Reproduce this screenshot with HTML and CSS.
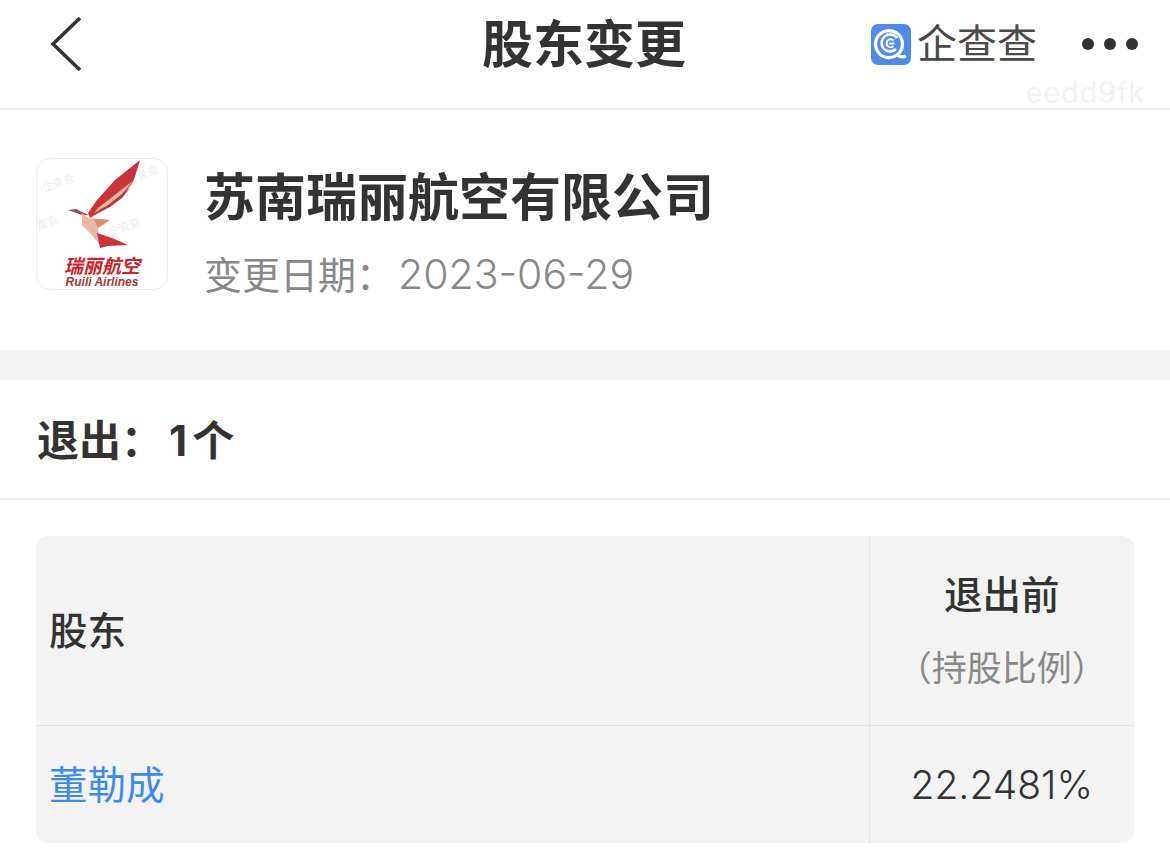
FILE: index.html
```html
<!DOCTYPE html>
<html lang="zh-CN">
<head>
    <meta charset="UTF-8">
    <meta name="viewport" content="width=device-width, initial-scale=1.0">
    <title>股东变更</title>
    <link rel="stylesheet" href="styles.css">
</head>
<body>

<header class="topbar">
    <svg class="back-icon" width="32" height="56" viewBox="0 0 32 56">
        <path d="M30 2 L3 28 L30 54" fill="none" stroke="#333" stroke-width="3.6"/>
    </svg>
    <h1 class="topbar-title">股东变更</h1>
    <div class="brand">
        <svg class="brand-icon" width="40" height="41" viewBox="0 0 40 41">
            <rect width="40" height="41" rx="7" fill="#4f8be6"/>
            <path d="M26 31 A13.5 13.5 0 1 1 31.5 20 A13.5 13.5 0 0 1 26 31 Q30 34 35 32" fill="none" stroke="#fff" stroke-width="3.2"/>
            <path d="M25 25 A8.5 8.5 0 1 1 26 14" fill="none" stroke="#fff" stroke-width="2.6"/>
            <path d="M22.5 22 A4 4 0 1 1 22.5 16.5 M18 19.5 H23.5" fill="none" stroke="#fff" stroke-width="2"/>
        </svg>
        <span class="brand-name">企查查</span>
    </div>
    <div class="more-dots"><i></i><i></i><i></i></div>
    <span class="watermark">eedd9fk</span>
</header>

<section class="company">
    <div class="logo">
        <svg class="logo-bird" width="132" height="132" viewBox="0 0 132 132">
            <text class="logo-mark" x="8" y="34" transform="rotate(-20 8 34)">企查查</text>
            <text class="logo-mark" x="92" y="26" transform="rotate(-20 92 26)">企查查</text>
            <text class="logo-mark" x="2" y="72" transform="rotate(-20 2 72)">查查</text>
            <text class="logo-mark" x="74" y="78" transform="rotate(-20 74 78)">企查查</text>
            <path d="M104 2 L79 22 L61 42 L52 55 L54 60 L71 50 L86 39 L97 24 L102 9 Z" fill="#c8343a"/>
            <path d="M98 22 L80 36 L62 50 L58 55 L72 47 L86 36 Z" fill="#e8b9a0"/>
            <path d="M94 30 L78 43 L62 55 L74 49 L86 40 Z" fill="#b8383c"/>
            <path d="M32 52 L40 51 L46 54 L53 57 L46 57 Z" fill="#a04a44"/>
            <path d="M46 55 L52 60 L74 62 L62 70 L64 87 L54 75 L46 67 Z" fill="#eab8a4"/>
            <path d="M58 61 L74 62 L62 70 Z" fill="#d98c78"/>
            <path d="M61 75 L76 80 L92 87 L72 88 L64 90 Z" fill="#c8343a"/>
        </svg>
        <span class="logo-cn">瑞丽航空</span>
        <span class="logo-en">Ruili Airlines</span>
    </div>
    <div class="company-info">
        <div class="company-name">苏南瑞丽航空有限公司</div>
        <div class="change-date">变更日期：<span class="date-num">2023-06-29</span></div>
    </div>
</section>

<div class="band"></div>

<div class="section-title">退出：<span class="count">1</span>个</div>

<div class="table-wrap">
    <table class="holders">
        <thead>
            <tr>
                <th class="col-name"><span class="cell-up">股东</span></th>
                <th class="col-ratio"><span class="cell-up">退出前<small>（持股比例）</small></span></th>
            </tr>
        </thead>
        <tbody>
            <tr>
                <td class="col-name"><a class="cell-up" href="#">董勒成</a></td>
                <td class="col-ratio">22.2481%</td>
            </tr>
        </tbody>
    </table>
</div>

</body>
</html>
```

FILE: styles.css
```css
* {
    box-sizing: border-box;
}
body {
    margin: 0;
    background: #fff;
    color: #333;
    font-family: "Liberation Sans", "Noto Sans CJK SC", sans-serif;
    overflow: hidden;
}
.topbar {
    position: relative;
    display: flex;
    align-items: center;
    height: 110px;
    padding: 0 30px 20px 50px;
    border-bottom: 2px solid #eee;
}
.back-icon {
    display: block;
}
.topbar-title {
    margin: 4px 0 0 400px;
    font-size: 51px;
    font-weight: 700;
    line-height: 60px;
}
.brand {
    display: flex;
    align-items: center;
    gap: 6px;
    margin-left: 185px;
}
.brand-icon {
    display: block;
}
.brand-name {
    font-size: 40px;
    font-weight: 400;
    line-height: 42px;
    color: #4a4a4a;
}
.more-dots {
    display: flex;
    gap: 10px;
    margin-left: 45px;
}
.more-dots i {
    display: block;
    width: 12px;
    height: 12px;
    border-radius: 50%;
    background: #333;
}
.watermark {
    position: absolute;
    right: 25px;
    top: 73px;
    font-family: "Inter", sans-serif;
    font-size: 29.5px;
    line-height: 38px;
    letter-spacing: 0.5px;
    color: #f3f3f3;
}
.company {
    display: flex;
    align-items: flex-start;
    gap: 38px;
    height: 240px;
    padding: 0 36px;
}
.logo {
    position: relative;
    flex: none;
    width: 132px;
    height: 132px;
    margin-top: 48px;
    border: 1px solid #eee;
    border-radius: 14px;
    overflow: hidden;
    text-align: center;
}
.logo-bird {
    position: absolute;
    left: -1px;
    top: -1px;
}
.logo-mark {
    font-size: 11px;
    fill: #eee;
}
.logo-cn {
    position: absolute;
    left: 0;
    right: 0;
    top: 97px;
    font-size: 19px;
    line-height: 22px;
    font-weight: 700;
    font-style: italic;
    color: #c9252c;
}
.logo-en {
    position: absolute;
    left: 0;
    right: 0;
    top: 117px;
    font-size: 12px;
    line-height: 13px;
    font-weight: 700;
    font-style: italic;
    color: #9a3a3c;
}
.company-info {
    padding-top: 59px;
}
.company-name {
    margin-left: -2px;
    font-size: 51px;
    font-weight: 700;
    line-height: 60px;
}
.change-date {
    margin-top: 23px;
    margin-left: -2px;
    font-size: 38px;
    line-height: 44px;
    color: #888;
}
.date-num {
    margin-left: 4px;
    font-family: "Inter", sans-serif;
    font-weight: 300;
    font-size: 41px;
}
.band {
    height: 30px;
    background: #f4f4f4;
}
.section-title {
    height: 120px;
    padding: 36px 37px 0;
    border-bottom: 2px solid #eee;
    font-size: 42px;
    font-weight: 700;
    line-height: 50px;
}
.count {
    margin: 0 5px 0 6px;
    font-family: "Inter", sans-serif;
    font-weight: 700;
}
.table-wrap {
    margin: 36px 36px 0;
    background: #f3f3f3;
    border-radius: 12px;
    overflow: hidden;
}
.holders {
    width: 100%;
    border-collapse: collapse;
    table-layout: fixed;
}
.holders th, .holders td {
    padding: 0;
    border: 1px solid #e2e2e2;
    font-size: 38.5px;
}
.holders thead tr {
    height: 189px;
}
.holders tbody tr {
    height: 118px;
}
.holders tr > :first-child {
    border-left: none;
}
.holders tr > :last-child {
    border-right: none;
}
.holders thead th {
    border-top: none;
}
.holders tbody td {
    border-bottom: none;
}
.col-name {
    text-align: left;
    padding-left: 13px !important;
}
.col-ratio {
    width: 265px;
    text-align: center;
}
th.col-name, th.col-ratio {
    font-weight: 500;
}
.cell-up {
    display: block;
    margin-top: -5px;
}
.holders small {
    display: block;
    margin-top: 20px;
    font-size: 35px;
    font-weight: 400;
    color: #888;
    white-space: nowrap;
}
.holders a {
    color: #3d8be8;
    text-decoration: none;
}
.holders td.col-ratio {
    font-family: "Inter", sans-serif;
    font-weight: 300;
    font-size: 39px;
}
```
